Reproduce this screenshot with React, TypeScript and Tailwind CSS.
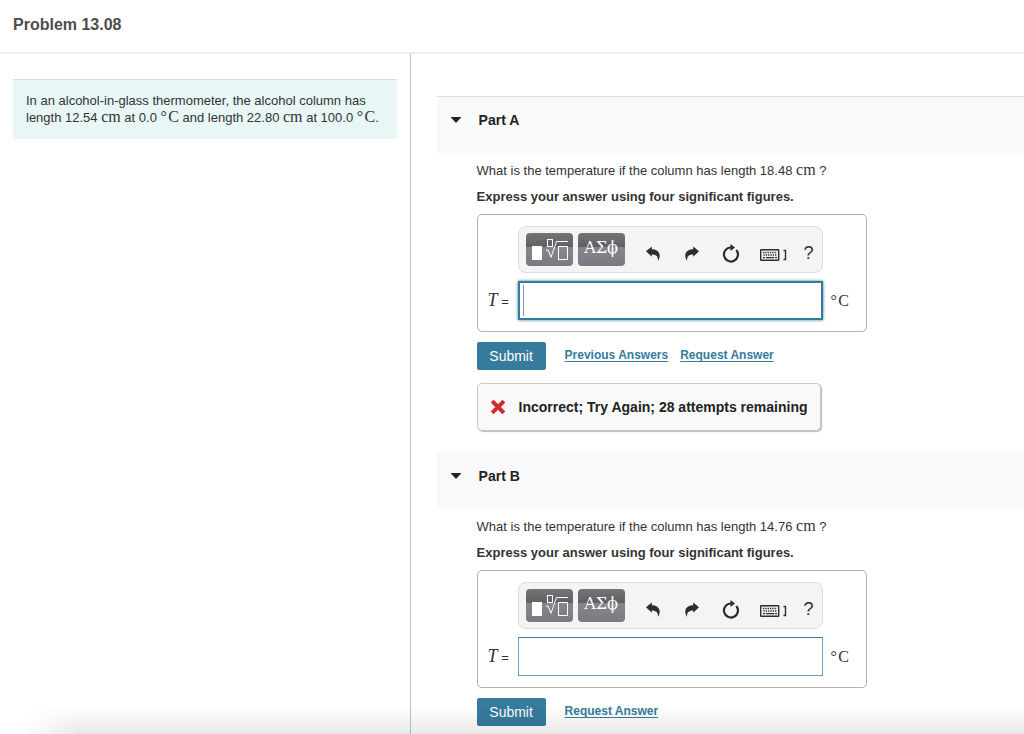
import { useId, useState, type ReactNode } from "react";
import clsx from "clsx";

function Tex({ children }: { children: ReactNode }) {
  return (
    <span className="font-['Liberation_Serif',serif] text-base/4">{children}</span>
  );
}

// degree sign and C, set apart by a hair space
const CELSIUS = "°\u200AC";

function UndoIcon({ flip = false }: { flip?: boolean }) {
  return (
    <svg
      viewBox="0 0 14 15"
      className={clsx("h-[15px] w-[14px]", flip && "-scale-x-100")}
      fill="currentColor"
    >
      <path d="M0 5.200 5.800.4v2.800c4.800 0 7.900 2.500 7.900 6.400 0 1.900-.6 3.500-1.400 4.900-.3.100-.5 0-.4-.4.3-3.500-1.700-5.700-6.100-5.700v2.300z" />
    </svg>
  );
}

function ResetIcon() {
  return (
    <svg viewBox="0 0 18 19" className="h-[19px] w-[18px]" fill="none">
      <path d="M14.300 6a7 7 0 1 1-5.300-2.500h1" stroke="currentColor" strokeWidth="2.200" />
      <path d="M8.500 0l4.500 3.600-4.500 3.500z" fill="currentColor" />
    </svg>
  );
}

function KeyboardIcon() {
  return (
    <svg viewBox="0 0 27 14" className="h-[14px] w-[27px]" fill="none" stroke="currentColor">
      <rect x=".7" y="1.700" width="18" height="10.600" rx=".5" strokeWidth="1.400" />
      <path d="M3 4.500h14" strokeWidth="1.300" strokeDasharray="1.300 1" />
      <path d="M3.500 7h13" strokeWidth="1.300" strokeDasharray="1.300 1" />
      <path d="M3 9.600h2M6 9.600h8M15 9.600h2" strokeWidth="1.300" />
      <path d="M23.500 2.500h2v9h-2" strokeWidth="1.400" />
    </svg>
  );
}

function RootIcon() {
  return (
    <svg viewBox="0 0 37 22" className="h-[22px] w-[37px]" fill="none" stroke="white">
      <rect x="1" y="7" width="10" height="14" fill="white" stroke="none" />
      <rect x="16.500" y=".5" width="5" height="7" />
      <path d="M15 11.500l2-.7 3 7.500L25.500 2.500H37" />
      <rect x="27.500" y="7.500" width="9" height="13" />
    </svg>
  );
}

const palette =
  "grid h-[33px] w-[47px] place-items-center rounded bg-[linear-gradient(#747476,#606062_43%,#86868e_43%,#7a7a80)] text-white";

const tool = "grid w-[39px] place-items-center";

function Toolbar() {
  return (
    <div className="flex h-[47px] w-[305px] items-center rounded-lg border border-[#dddddd] bg-[#f4f4f4] pl-[7px] text-[#2d2d2d]">
      <div className="flex gap-[5px]">
        <button type="button" aria-label="Templates" className={palette}>
          <RootIcon />
        </button>
        <button type="button" aria-label="Symbols" className={palette}>
          <span className="pb-1 font-['DejaVu_Serif',serif] text-base/5">ΑΣϕ</span>
        </button>
      </div>
      <div className="ml-[9px] flex items-center pt-[7px]">
        <button type="button" aria-label="Undo" className={tool}>
          <UndoIcon />
        </button>
        <button type="button" aria-label="Redo" className={tool}>
          <UndoIcon flip />
        </button>
        <button type="button" aria-label="Reset" className={tool}>
          <ResetIcon />
        </button>
        <button type="button" aria-label="Keyboard shortcuts" className="grid w-[46px] place-items-center pt-1">
          <KeyboardIcon />
        </button>
        <button type="button" aria-label="Help" className="w-6 text-lg/5">
          ?
        </button>
      </div>
    </div>
  );
}

function Answer({ active }: { active: boolean }) {
  const id = useId();
  const [value, setValue] = useState("");

  return (
    <div className="mt-2 flex h-[118px] w-[390px] flex-col gap-2 rounded-[5px] border border-[#b0b0b0] py-[11px]">
      <div className="pl-10">
        <Toolbar />
      </div>
      <div className="flex items-center">
        <label htmlFor={id} className="w-10 shrink-0 pl-[10px] whitespace-nowrap">
          <i className="font-['Liberation_Serif',serif] text-lg/5">T</i> =
        </label>
        <div className="relative">
          <input
            id={id}
            value={value}
            onChange={(e) => setValue(e.target.value)}
            className={clsx(
              "block h-[39px] w-[305px] bg-white px-1 text-lg outline-none",
              active
                ? "border-2 border-[#367b9c] shadow-[0_0_3px_#367b9c]"
                : "border border-[#6d9fb7] border-t-[#367b9c]",
            )}
          />
          {/* waiting cursor of the math editor */}
          {active && value === "" && (
            <span className="pointer-events-none absolute top-1 left-[5px] h-[31px] w-px bg-[#7b8fdc]" />
          )}
        </div>
        <span className="pl-2 font-['Liberation_Serif',serif] text-base/5">{CELSIUS}</span>
      </div>
    </div>
  );
}

const link = "text-xs font-bold text-[#367b9c] underline underline-offset-2";

function Part({
  name,
  length,
  first = false,
  children,
}: {
  name: string;
  length: string;
  first?: boolean;
  children?: ReactNode;
}) {
  return (
    <section>
      <h2 className={clsx("bg-[#f9f9f9]", first && "border-t border-[#dddddd]")}>
        <button
          type="button"
          aria-expanded="true"
          className="flex h-14 w-full items-center gap-[17px] pb-[10px] pl-[13px] text-sm font-bold text-[#222222]"
        >
          <svg viewBox="0 0 12 6" className="h-[6px] w-3" fill="currentColor">
            <path d="M.5 0h11L6 6z" />
          </svg>
          {name}
        </button>
      </h2>
      <div className="pt-[9px] pl-10">
        <p className="h-[18px] text-[13px]/[18px]">
          What is the temperature if the column has length {length} <Tex>cm</Tex> ?
        </p>
        <p className="mt-2 text-[13px]/[18px] font-bold">
          Express your answer using four significant figures.
        </p>
        <Answer active={first} />
        <div className="mt-[10px] flex h-7 items-center">
          <button type="button" className="h-7 w-[69px] rounded-xs bg-[#367b9c] text-sm text-white">
            Submit
          </button>
          <div className="ml-[19px] flex gap-3 pb-0.5">
            {first && (
              <a href="#previous" className={link}>
                Previous Answers
              </a>
            )}
            <a href="#request" className={link}>
              Request Answer
            </a>
          </div>
        </div>
        {children}
      </div>
    </section>
  );
}

export default function App() {
  return (
    <div className="flex min-h-screen flex-col bg-white font-['Liberation_Sans',sans-serif] text-[13px] text-[#333333]">
      <header className="border-b-2 border-[#eeeeee] px-[13px] pt-[13px] pb-[15px]">
        <h1 className="text-base/6 font-bold text-[#4d4d4d]">Problem 13.08</h1>
      </header>

      <main className="flex grow">
        <div className="w-2/5 shrink-0 pt-[25px] pr-[13px] pl-[13px]">
          <div className="border-t border-[#d8dedd] bg-[#e8f6f6] px-[13px] pt-3 pb-[13px]">
            <p className="text-[13px]/[17px]">
              In an alcohol-in-glass thermometer, the alcohol column has length 12.54{" "}
              <Tex>cm</Tex> at 0.0 <Tex>{CELSIUS}</Tex> and length 22.80 <Tex>cm</Tex> at 100.0{" "}
              <Tex>{CELSIUS}</Tex>.
            </p>
          </div>
        </div>

        <div className="grow border-l border-[#b4c4dc] pt-[42px] pb-2 pl-[26px]">
          <Part name="Part A" length="18.48" first>
            <div
              role="status"
              className="mt-[13px] mb-[22px] flex h-12 w-[344px] items-center gap-[14px] rounded-[5px] border border-[#c8c8c8] bg-[#f9f9f9] pl-[13px] text-sm font-bold whitespace-nowrap text-[#222222] shadow-[1px_1px_1px_#bbbbbb]"
            >
              <svg viewBox="0 0 14 14" className="size-[14px]" stroke="#cf2c2c" strokeWidth="4">
                <path d="M2.500 2.500l9 9M11.500 2.500l-9 9" strokeLinecap="square" />
              </svg>
              Incorrect; Try Again; 28 attempts remaining
            </div>
          </Part>
          <Part name="Part B" length="14.76" />
        </div>
      </main>

      {/* shade along the bottom edge of the window */}
      <div className="pointer-events-none fixed inset-x-0 bottom-0 h-7 bg-linear-to-t from-black/9 to-transparent mask-[linear-gradient(to_right,transparent_20px,black_80px)]" />
    </div>
  );
}
